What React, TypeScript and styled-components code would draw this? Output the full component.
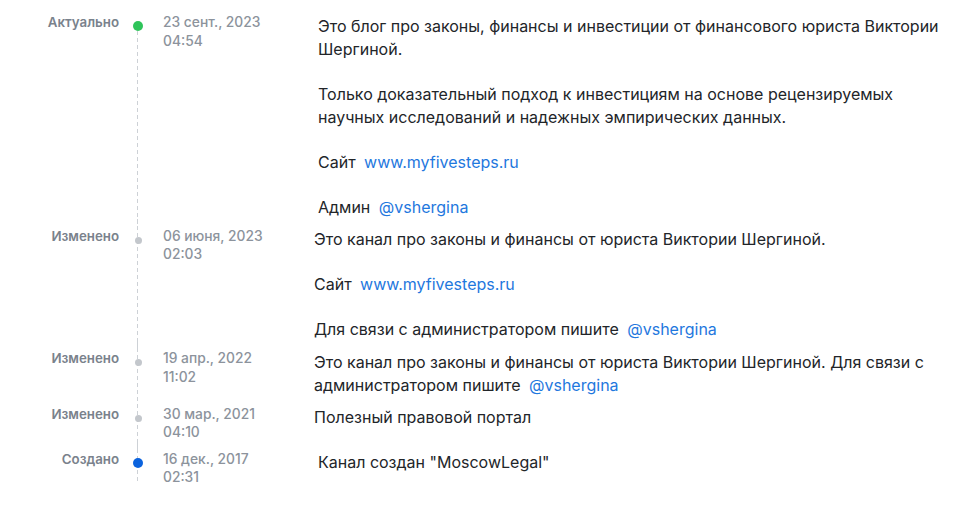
import React from "react";
import styled, { createGlobalStyle } from "styled-components";

const Global = createGlobalStyle`
  html, body { margin: 0; padding: 0; background: #ffffff; }
  body { font-family: Inter, "Noto Sans", sans-serif; -webkit-font-smoothing: antialiased; }
`;

const Timeline = styled.div`
  display: flex;
  flex-direction: column;
  gap: 8px;
  padding: 13px 24px 0 0;
  width: 974px;
  box-sizing: border-box;
`;

const Row = styled.div`
  display: grid;
  grid-template-columns: 119px 38px 151px 1fr;
`;

const Status = styled.div`
  font-size: 13.3px;
  line-height: 18px;
  font-weight: 600;
  color: #7a828c;
  text-align: right;
`;

const Rail = styled.div<{ $first?: boolean; $last?: boolean }>`
  position: relative;
  display: flex;
  justify-content: center;
  align-items: flex-start;
  &::before {
    content: "";
    position: absolute;
    left: 18px;
    width: 1px;
    top: ${(p) => (p.$first ? "18px" : "-8px")};
    bottom: ${(p) => (p.$last ? "6px" : "-8px")};
    background: repeating-linear-gradient(
      to bottom,
      #cdd1d6 0 4px,
      transparent 4px 7px
    );
  }
`;

const Dot = styled.span<{ $kind: "green" | "gray" | "blue" }>`
  position: relative;
  z-index: 1;
  display: block;
  border-radius: 50%;
  width: ${(p) => (p.$kind === "gray" ? "7px" : "10px")};
  height: ${(p) => (p.$kind === "gray" ? "7px" : "10px")};
  margin-top: ${(p) => (p.$kind === "gray" ? "10px" : "8px")};
  background: ${(p) =>
    p.$kind === "green" ? "#2fc45a" : p.$kind === "blue" ? "#0b63de" : "#c3c7cc"};
`;

const DateCol = styled.div`
  padding-left: 6px;
  font-size: 13.8px;
  line-height: 18.5px;
  font-weight: 500;
  color: #8c939c;
`;

const Body = styled.div<{ $indent?: boolean }>`
  padding-left: ${(p) => (p.$indent ? "10px" : "6px")};
  padding-top: 1.5px;
  font-size: 16px;
  line-height: 23px;
  color: #222529;
`;

const Para = styled.p`
  margin: 0 0 22px 0;
  &:last-child { margin-bottom: 0; }
`;

const Link = styled.a`
  color: #1f78de;
  text-decoration: none;
  padding-left: 4px;
`;

type Entry = {
  status: string;
  dot: "green" | "gray" | "blue";
  date: string;
  time: string;
  indent?: boolean;
  content: React.ReactNode;
};

const entries: Entry[] = [
  {
    status: "Актуально",
    dot: "green",
    date: "23 сент., 2023",
    time: "04:54",
    indent: true,
    content: (
      <>
        <Para>
          Это блог про законы, финансы и инвестиции от финансового юриста Виктории Шергиной.
        </Para>
        <Para>
          Только доказательный подход к инвестициям на основе рецензируемых научных
          исследований и надежных эмпирических данных.
        </Para>
        <Para>
          Сайт <Link href="#">www.myfivesteps.ru</Link>
        </Para>
        <Para>
          Админ <Link href="#">@vshergina</Link>
        </Para>
      </>
    ),
  },
  {
    status: "Изменено",
    dot: "gray",
    date: "06 июня, 2023",
    time: "02:03",
    content: (
      <>
        <Para>Это канал про законы и финансы от юриста Виктории Шергиной.</Para>
        <Para>
          Сайт <Link href="#">www.myfivesteps.ru</Link>
        </Para>
        <Para>
          Для связи с администратором пишите <Link href="#">@vshergina</Link>
        </Para>
      </>
    ),
  },
  {
    status: "Изменено",
    dot: "gray",
    date: "19 апр., 2022",
    time: "11:02",
    content: (
      <Para>
        Это канал про законы и финансы от юриста Виктории Шергиной. Для связи с
        администратором пишите <Link href="#">@vshergina</Link>
      </Para>
    ),
  },
  {
    status: "Изменено",
    dot: "gray",
    date: "30 мар., 2021",
    time: "04:10",
    content: <Para>Полезный правовой портал</Para>,
  },
  {
    status: "Создано",
    dot: "blue",
    date: "16 дек., 2017",
    time: "02:31",
    indent: true,
    content: <Para>Канал создан "MoscowLegal"</Para>,
  },
];

export default function App() {
  return (
    <>
      <Global />
      <Timeline>
        {entries.map((e, i) => (
          <Row key={i}>
            <Status>{e.status}</Status>
            <Rail $first={i === 0} $last={i === entries.length - 1}>
              <Dot $kind={e.dot} />
            </Rail>
            <DateCol>
              {e.date}
              <br />
              {e.time}
            </DateCol>
            <Body $indent={e.indent}>{e.content}</Body>
          </Row>
        ))}
      </Timeline>
    </>
  );
}
